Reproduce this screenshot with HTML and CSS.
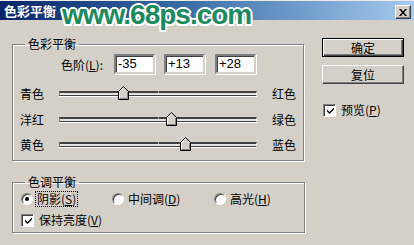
FILE: index.html
```html
<!DOCTYPE html>
<html lang="zh">
<head>
<meta charset="utf-8">
<title>色彩平衡</title>
<link rel="stylesheet" href="styles.css">
</head>
<body>
<div class="dialog">
  <div class="titlebar">
    <span class="title">色彩平衡</span>
    <span class="close-btn"><svg width="8" height="7" viewBox="0 0 8 7"><path d="M0 0h2l2 2.5 2-2.5h2l-3 3.5 3 3.5h-2l-2-2.5-2 2.5h-2l3-3.5z" fill="#000"/></svg></span>
  </div>
  <div class="watermark">www.68ps.com</div>
  <div class="content">
    <div class="main">
      <fieldset class="group g1">
        <legend>色彩平衡</legend>
        <div class="levels">
          <span class="levels-label">色阶(<u>L</u>):</span>
          <span class="field">-35</span>
          <span class="field">+13</span>
          <span class="field">+28</span>
        </div>
        <div class="slider-row">
          <span>青色</span>
          <div class="track"><span class="tick"></span><span class="thumb" style="left:32.3%"><svg width="11" height="14" viewBox="0 0 11 14"><path d="M0.5 5.5 5.5 0.5 10.5 5.5V13.5H0.5Z" fill="#d4d0c8" stroke="#000"/><path d="M1.5 12.5V5.9L5.5 1.9" fill="none" stroke="#fff"/><path d="M9.5 6V12.5H1.5" fill="none" stroke="#808080"/></svg></span></div>
          <span>红色</span>
        </div>
        <div class="slider-row">
          <span>洋红</span>
          <div class="track"><span class="tick"></span><span class="thumb" style="left:56.5%"><svg width="11" height="14" viewBox="0 0 11 14"><path d="M0.5 5.5 5.5 0.5 10.5 5.5V13.5H0.5Z" fill="#d4d0c8" stroke="#000"/><path d="M1.5 12.5V5.9L5.5 1.9" fill="none" stroke="#fff"/><path d="M9.5 6V12.5H1.5" fill="none" stroke="#808080"/></svg></span></div>
          <span>绿色</span>
        </div>
        <div class="slider-row">
          <span>黄色</span>
          <div class="track"><span class="tick"></span><span class="thumb" style="left:64%"><svg width="11" height="14" viewBox="0 0 11 14"><path d="M0.5 5.5 5.5 0.5 10.5 5.5V13.5H0.5Z" fill="#d4d0c8" stroke="#000"/><path d="M1.5 12.5V5.9L5.5 1.9" fill="none" stroke="#fff"/><path d="M9.5 6V12.5H1.5" fill="none" stroke="#808080"/></svg></span></div>
          <span>蓝色</span>
        </div>
      </fieldset>
      <fieldset class="group g2">
        <legend>色调平衡</legend>
        <div class="radio-row">
          <label class="opt"><span class="radio checked"></span><span class="focus">阴影(<u>S</u>)</span></label>
          <label class="opt"><span class="radio"></span><span>中间调(<u>D</u>)</span></label>
          <label class="opt"><span class="radio"></span><span>高光(<u>H</u>)</span></label>
        </div>
        <label class="opt check-row"><span class="checkbox"><svg width="9" height="9" viewBox="0 0 9 9"><path d="M1 3.5 3.5 6 8 1.5V3.5L3.5 8 1 5.5Z" fill="#000"/></svg></span><span>保持亮度(<u>V</u>)</span></label>
      </fieldset>
    </div>
    <div class="side">
      <button class="btn default">确定</button>
      <button class="btn">复位</button>
      <label class="opt preview"><span class="checkbox"><svg width="9" height="9" viewBox="0 0 9 9"><path d="M1 3.5 3.5 6 8 1.5V3.5L3.5 8 1 5.5Z" fill="#000"/></svg></span><span>预览(<u>P</u>)</span></label>
    </div>
  </div>
</div>
</body>
</html>
```

FILE: styles.css
```css
* { box-sizing: border-box; }
html, body { margin: 0; padding: 0; }
body {
  background: #d4d0c8;
  font-family: "Noto Sans CJK SC", "Liberation Sans", sans-serif;
  font-size: 12px;
  color: #000;
}
.dialog {
  position: relative;
  width: 414px;
  height: 245px;
  background: #d4d0c8;
  overflow: hidden;
}
.titlebar {
  height: 20px;
  border-top: 1px solid #ecebe6;
  background: linear-gradient(to right, #0a246a 0%, #3a6ea5 45%, #a6caf0 100%);
  display: flex;
  align-items: center;
  justify-content: space-between;
  padding: 0 3px 0 4px;
}
.title {
  color: #fff;
  font-weight: bold;
  font-size: 13px;
  line-height: 1;
}
.close-btn {
  width: 16px;
  height: 14px;
  margin-top: 3px;
  background: #d4d0c8;
  border: 1px solid;
  border-color: #fff #404040 #404040 #fff;
  box-shadow: inset -1px -1px 0 #808080;
  display: flex;
  align-items: center;
  justify-content: center;
}
.watermark {
  position: absolute;
  left: 62px;
  top: 0;
  line-height: 30px;
  font-family: "Liberation Sans", Arial, sans-serif;
  font-weight: bold;
  font-size: 28px;
  letter-spacing: -1px;
  color: #1d8a5e;
  text-shadow:
    2px 0 0 #fff, -2px 0 0 #fff, 0 2px 0 #fff, 0 -2px 0 #fff,
    1.5px 1.5px 0 #fff, -1.5px 1.5px 0 #fff, 1.5px -1.5px 0 #fff, -1.5px -1.5px 0 #fff;
}
.content {
  display: flex;
  padding: 16px 0 0 12px;
}
.main {
  width: 293px;
  display: flex;
  flex-direction: column;
}
.group {
  margin: 0;
  padding: 0;
  border: 1px solid #808080;
  box-shadow: inset 1px 1px 0 #fff, 1px 1px 0 #fff;
  min-width: 0;
}
.group legend {
  margin-left: 12px;
  padding: 0 3px;
  line-height: 16px;
  font-size: 12px;
}
.g1 { width: 292px; padding-bottom: 2.5px; }
.g2 { width: 293px; margin-top: 13px; height: 59px; }
.levels {
  display: flex;
  justify-content: flex-end;
  align-items: center;
  gap: 9px;
  padding-right: 47px;
  margin-top: 2px;
}
.levels-label { margin-right: 2px; }
.field {
  width: 41px;
  height: 20px;
  background: #fff;
  border: 2px solid;
  border-color: #808080 #d4d0c8 #d4d0c8 #808080;
  box-shadow: inset 1px 1px 0 #404040, 1px 1px 0 #fff;
  font-family: "Liberation Sans", Arial, sans-serif;
  font-size: 13px;
  line-height: 16px;
  padding-left: 2px;
}
.field:last-child { margin-left: 1px; }
.slider-row {
  display: grid;
  grid-template-columns: 24px 198px 24px;
  column-gap: 15px;
  align-items: center;
  height: 25.5px;
  padding-left: 7px;
}
.levels + .slider-row { margin-top: 7px; }
.track {
  position: relative;
  height: 5px;
  background: #e6e4df;
  border-top: 2px solid #404040;
  border-bottom: 1px solid #404040;
  border-left: 1px solid #808080;
  border-right: 1px solid #fff;
  box-shadow: 0 1px 0 #fff;
}
.tick {
  position: absolute;
  left: 50%;
  top: -2px;
  width: 1px;
  height: 2px;
  background: #a0a0a0;
}
.thumb {
  position: absolute;
  top: -7px;
  margin-left: -5px;
  width: 11px;
  height: 14px;
  display: block;
}
.thumb svg { display: block; }
.radio-row {
  display: grid;
  grid-template-columns: 91px 102px auto;
  padding-left: 8px;
  margin-top: 1px;
  height: 16px;
  align-items: center;
}
.opt {
  display: flex;
  align-items: center;
  gap: 4px;
  line-height: 14px;
}
.radio {
  width: 12px;
  height: 12px;
  border-radius: 50%;
  background: #fff;
  border: 1px solid;
  border-color: #808080 #fff #fff #808080;
  box-shadow: inset 1px 1px 0 #404040;
  position: relative;
  flex: none;
}
.radio.checked::after {
  content: "";
  position: absolute;
  left: 3px;
  top: 3px;
  width: 4px;
  height: 4px;
  border-radius: 50%;
  background: #000;
}
.focus {
  outline: 1px dotted #000;
  outline-offset: 0;
  padding: 0 1px;
  margin-left: -1px;
}
.checkbox {
  width: 13px;
  height: 13px;
  background: #fff;
  border: 1px solid;
  border-color: #808080 #fff #fff #808080;
  box-shadow: inset 1px 1px 0 #404040;
  display: flex;
  align-items: center;
  justify-content: center;
  flex: none;
  padding: 1px 0 0 1px;
}
.checkbox svg { display: block; }
.check-row {
  padding-left: 8px;
  margin-top: 6px;
  gap: 5px;
}
.side {
  display: flex;
  flex-direction: column;
  margin-left: 17px;
  padding-top: 2px;
  width: 82px;
}
.btn {
  width: 82px;
  height: 19px;
  font-family: "Noto Sans CJK SC", sans-serif;
  font-size: 12px;
  line-height: 1;
  padding: 0;
  color: #000;
  background: #d4d0c8;
  border: 1px solid;
  border-color: #fff #404040 #404040 #fff;
  box-shadow: inset -1px -1px 0 #808080;
}
.btn.default {
  border: 1px solid #000;
  box-shadow: inset 1px 1px 0 #fff, inset -1px -1px 0 #404040, inset -2px -2px 0 #808080;
}
.btn + .btn { margin-top: 8px; }
.preview {
  margin-top: 19px;
  padding-left: 1px;
  gap: 5px;
}
```
